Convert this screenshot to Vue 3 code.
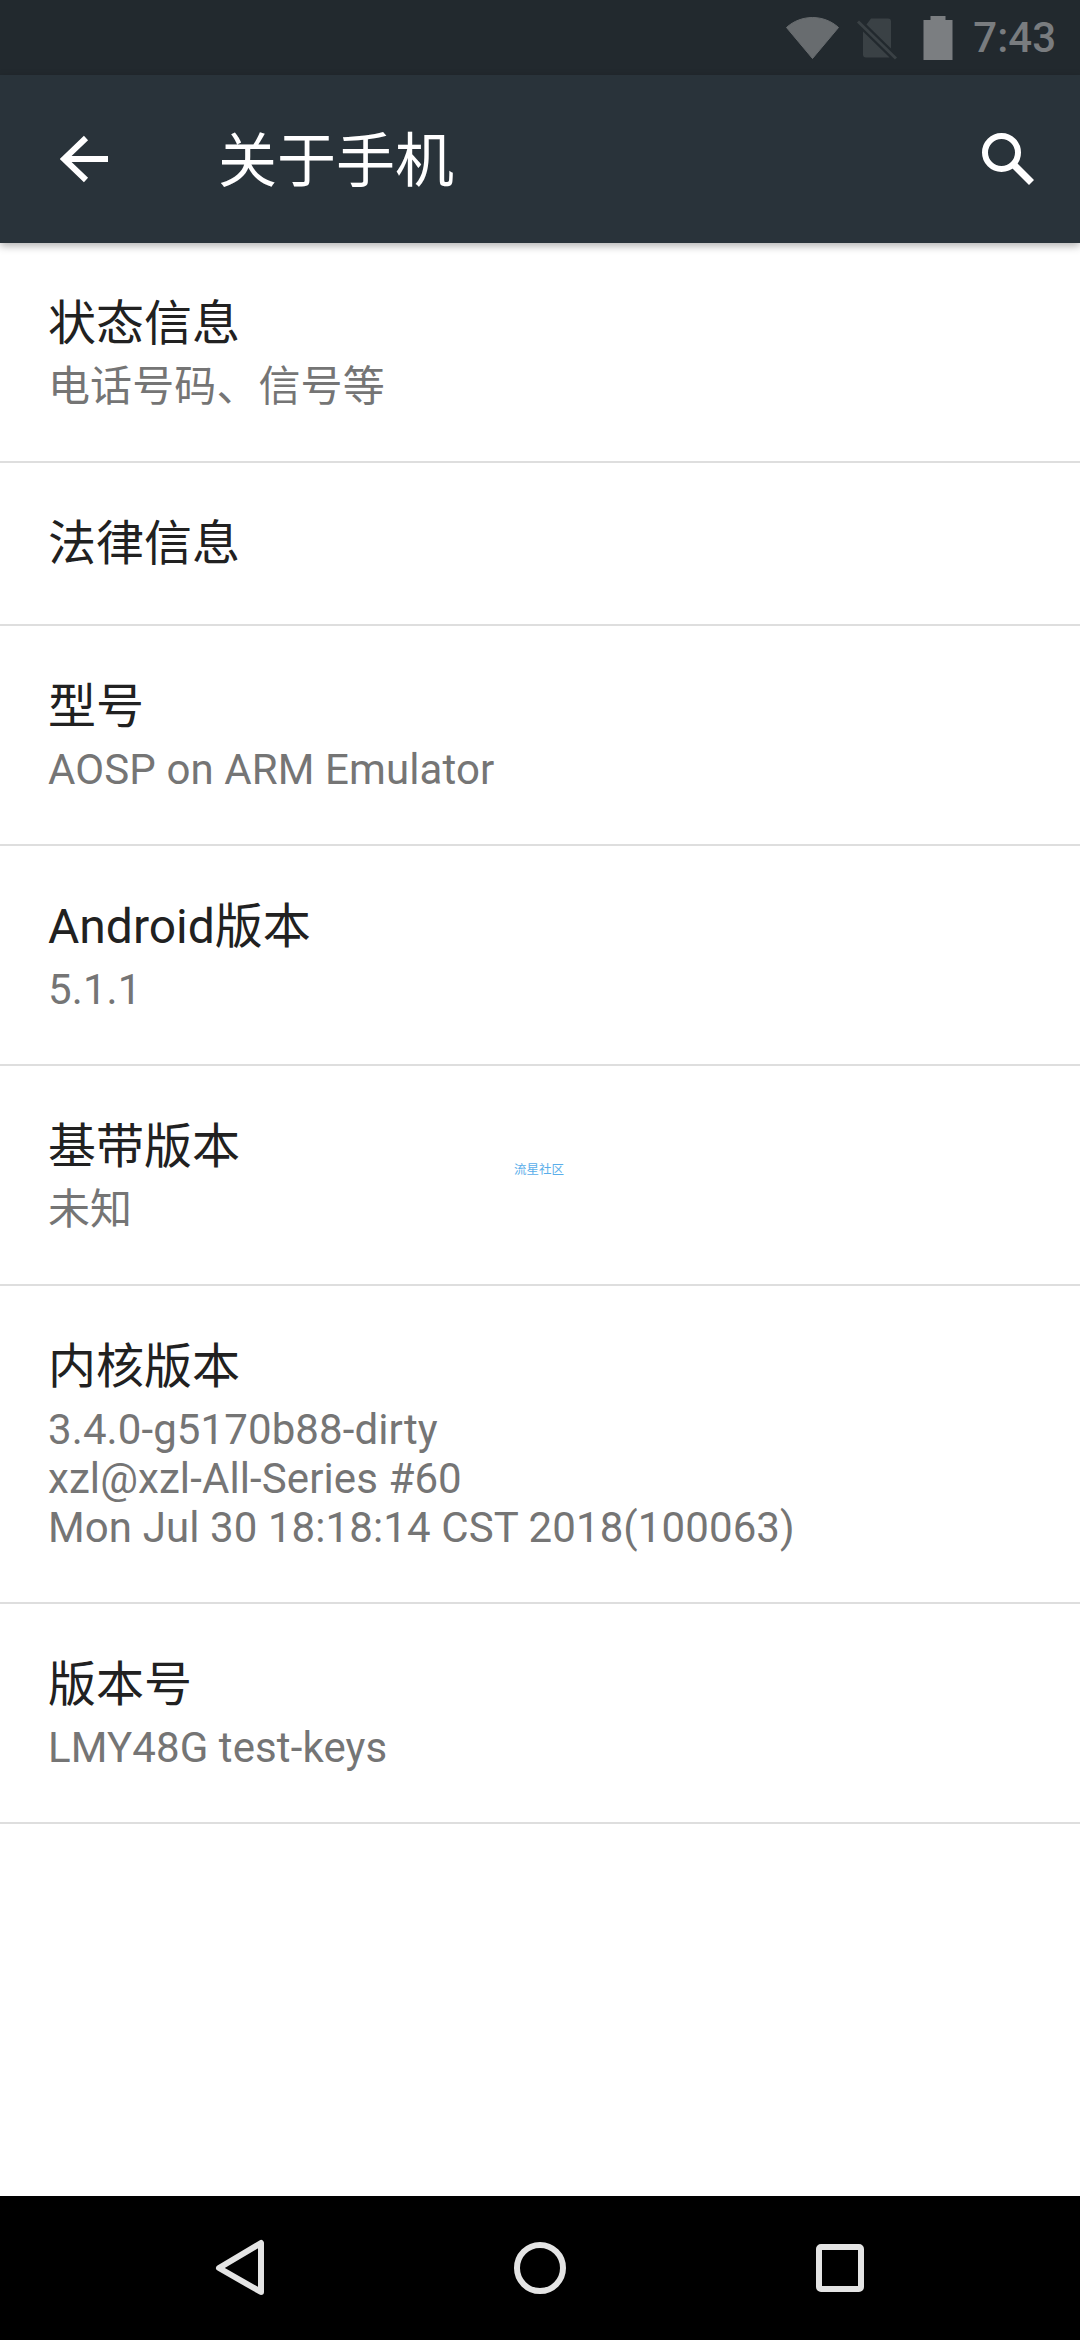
<script setup>
const rows = [
  { title: '状态信息', lines: ['电话号码、信号等'] },
  { title: '法律信息', lines: [] },
  { title: '型号', lines: ['AOSP on ARM Emulator'] },
  { title: 'Android版本', lines: ['5.1.1'] },
  { title: '基带版本', lines: ['未知'], mark: '流星社区' },
  { title: '内核版本', lines: ['3.4.0-g5170b88-dirty', 'xzl@xzl-All-Series #60', 'Mon Jul 30 18:18:14 CST 2018(100063)'] },
  { title: '版本号', lines: ['LMY48G test-keys'] },
]
</script>

<template>
  <div class="phone">
    <div class="status-bar">
      <svg class="wifi" width="54" height="42" viewBox="0 0 54 42">
        <path d="M0.500 10.500C7.500 4 17 0.500 26.500 0.500S45.500 4 52.500 10.500L26.500 41.500Z" fill="#686c6f" stroke="#686c6f" stroke-width="1" stroke-linejoin="round" />
      </svg>
      <svg class="sim" width="44" height="44" viewBox="0 0 44 44">
        <path d="M18 2.500H35Q38 2.500 38 5.500V32.600L13.500 8.500ZM10 15.400L36.600 41.500H13Q10 41.500 10 38.500Z" fill="#3a4145" />
        <path d="M5 5.500L43 42.500" stroke="#3a4145" stroke-width="3" />
      </svg>
      <svg class="battery" width="30" height="44" viewBox="0 0 30 44">
        <path d="M7.500 0H22.500V4H29.500V44H0.500V4H7.500Z" fill="#7b7e81" />
      </svg>
      <span class="time">7:43</span>
    </div>

    <div class="toolbar">
      <svg class="back" width="50" height="50" viewBox="0 0 50 50">
        <path d="M26 4L4 25L26 46M4 25H48" fill="none" stroke="#fff" stroke-width="6" />
      </svg>
      <div class="page-title">关于手机</div>
      <svg class="search" width="52" height="52" viewBox="0 0 52 52">
        <circle cx="19.500" cy="19.500" r="16.500" fill="none" stroke="#fff" stroke-width="6" />
        <path d="M31 31L49.500 49.500" stroke="#fff" stroke-width="7" />
      </svg>
    </div>

    <div class="list">
      <div v-for="row in rows" :key="row.title" class="row">
        <div class="row-title">{{ row.title }}</div>
        <div v-if="row.lines.length" class="row-subs">
          <div v-for="line in row.lines" :key="line" class="row-sub">{{ line }}</div>
        </div>
        <span v-if="row.mark" class="mark">{{ row.mark }}</span>
      </div>
    </div>

    <div class="nav-bar">
      <svg width="54" height="60" viewBox="0 0 54 60">
        <path d="M48 5V54L6 30Z" fill="none" stroke="#e4e4e4" stroke-width="6" stroke-linejoin="round" />
      </svg>
      <svg width="54" height="54" viewBox="0 0 54 54">
        <circle cx="27" cy="27" r="23" fill="none" stroke="#e4e4e4" stroke-width="6" />
      </svg>
      <svg width="54" height="54" viewBox="0 0 54 54">
        <rect x="6" y="6" width="42" height="42" rx="2" fill="none" stroke="#e4e4e4" stroke-width="6" />
      </svg>
    </div>
  </div>
</template>

<style scoped>
.phone {
  width: 1080px;
  height: 2340px;
  display: flex;
  flex-direction: column;
  background: #fff;
  font-family: Roboto, "Noto Sans CJK SC", sans-serif;
  overflow: hidden;
}

.status-bar {
  height: 75px;
  flex: none;
  display: flex;
  align-items: center;
  justify-content: flex-end;
  padding-right: 24px;
  background: #22292e;
}

.wifi {
  margin-right: 13px;
}

.sim {
  margin-right: 26px;
}

.time {
  margin-left: 20px;
  font-size: 42px;
  font-weight: 500;
  color: #797c7f;
}

.toolbar {
  height: 168px;
  flex: none;
  display: flex;
  align-items: center;
  padding: 0 46px 0 60px;
  background: #29333a;
  box-shadow: 0 3px 8px rgba(0, 0, 0, 0.3);
  position: relative;
}

.page-title {
  flex: 1;
  margin-left: 108px;
  margin-bottom: 5px;
  font-size: 59px;
  color: #fff;
}

.list {
  flex: 1;
}

.row {
  position: relative;
  padding: 46px 48px 45px;
  border-bottom: 2px solid #dedede;
}

.row-title {
  font-size: 48px;
  line-height: 70px;
  color: #212121;
}

.row-subs {
  margin: 3px 0 5px;
}

.row-sub {
  font-size: 42px;
  line-height: 49px;
  letter-spacing: 0.1px;
  color: #757575;
}

.mark {
  position: absolute;
  left: 514px;
  top: 96px;
  font-size: 12.500px;
  line-height: 16px;
  color: #5aaeea;
}

.nav-bar {
  height: 144px;
  flex: none;
  display: flex;
  align-items: center;
  justify-content: center;
  gap: 246px;
  background: #000;
}
</style>

<style>
html,
body {
  margin: 0;
  background: #fff;
}
</style>
